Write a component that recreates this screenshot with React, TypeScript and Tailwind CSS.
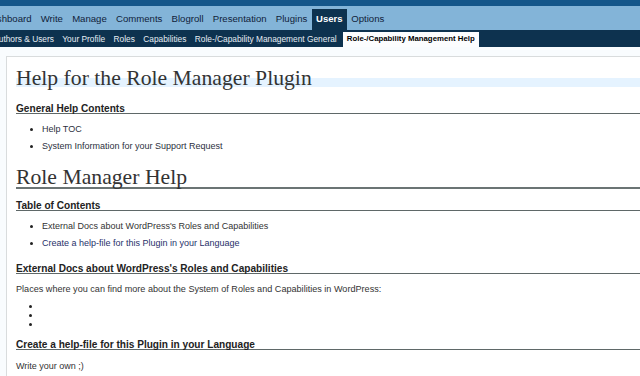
import React from 'react';

const menu = ["Dashboard", "Write", "Manage", "Comments", "Blogroll", "Presentation", "Plugins", "Users", "Options"];
const submenu = ["Authors & Users", "Your Profile", "Roles", "Capabilities", "Role-/Capability Management General", "Role-/Capability Management Help"];

const H3 = ({ children, className = "" }: { children: React.ReactNode; className?: string }) => (
  <h3 className={"ml-[9px] border-b border-[#5f6868] text-[10.1px] font-bold leading-[9px] text-[#222] " + className}>
    {children}
  </h3>
);

const App = () => {
  return (
    <div className="h-[376px] w-[640px] overflow-hidden bg-[#f9fcfe] font-['Liberation_Sans',Arial,sans-serif]">
      <div className="h-[6px] bg-[#14568a]" />
      <div className="flex h-[24px] items-end bg-[#83b4d8]">
        <div className="ml-[-20px] flex">
          {menu.map((m) => (
            <a
              key={m}
              className={
                m === "Users"
                  ? "flex h-[21px] shrink-0 items-center whitespace-nowrap bg-[#0d324f] px-[4.2px] text-[9.5px] font-bold text-white"
                  : "flex h-[21px] shrink-0 items-center whitespace-nowrap px-[4.6px] text-[9.6px] text-[#10223a]"
              }
            >
              {m}
            </a>
          ))}
        </div>
      </div>
      <div className="flex h-[17px] items-end bg-[#0d324f]">
        <div className="ml-[-11px] flex items-end">
          {submenu.map((s, i) =>
            i === submenu.length - 1 ? (
              <a key={s} className="ml-[2px] flex h-[15.5px] shrink-0 items-center whitespace-nowrap bg-[#fcfdfe] px-[4px] text-[7.8px] font-bold text-black">
                {s}
              </a>
            ) : (
              <a key={s} className="flex h-[16px] shrink-0 items-center whitespace-nowrap px-[4.2px] text-[8.35px] text-[#e6edf3]">
                {s}
              </a>
            )
          )}
        </div>
      </div>

      <div className="pl-[6px] pt-[9px]">
        <div className="h-[400px] border-l border-t border-[#d9dcdd] bg-white">
          <h2 className="ml-[9px] mt-[21px] border-b-[9px] border-[#e5f3ff] font-['Liberation_Serif',serif] text-[21.7px] font-normal leading-[0px] text-[#333]">
            Help for the Role Manager Plugin
          </h2>

          <H3 className="mt-[16.5px]">General Help Contents</H3>
          <ul className="mt-[7px] list-disc pl-[35px] text-[9px] leading-[17px] text-[#2c3040] marker:text-[#222]">
            <li><a>Help TOC</a></li>
            <li><a>System Information for your Support Request</a></li>
          </ul>

          <h2 className="ml-[9px] mt-[12px] border-b-2 border-[#6b7474] font-['Liberation_Serif',serif] text-[21.7px] font-normal leading-[20px] text-[#333]">
            Role Manager Help
          </h2>

          <H3 className="mt-[12.8px]">Table of Contents</H3>
          <ul className="mt-[7.2px] list-disc pl-[35px] text-[9px] leading-[17px] marker:text-[#222]">
            <li className="text-[#333]"><a>External Docs about WordPress's Roles and Capabilities</a></li>
            <li className="text-[#27306a]"><a>Create a help-file for this Plugin in your Language</a></li>
          </ul>

          <H3 className="mt-[12px]">External Docs about WordPress's Roles and Capabilities</H3>
          <p className="ml-[9px] mt-[7px] text-[9.1px] leading-[17px] text-[#333]">
            Places where you can find more about the System of Roles and Capabilities in WordPress:
          </p>
          <ul className="mt-[4px] list-disc pl-[35px] text-[10px] leading-[9px] text-[#222]">
            <li>{"\u00a0"}</li>
            <li>{"\u00a0"}</li>
            <li>{"\u00a0"}</li>
          </ul>

          <H3 className="mt-[11px]">Create a help-file for this Plugin in your Language</H3>
          <p className="ml-[9px] mt-[8px] text-[9px] leading-[17px] text-[#333]">Write your own ;)</p>
        </div>
      </div>
    </div>
  );
};

export default App;
